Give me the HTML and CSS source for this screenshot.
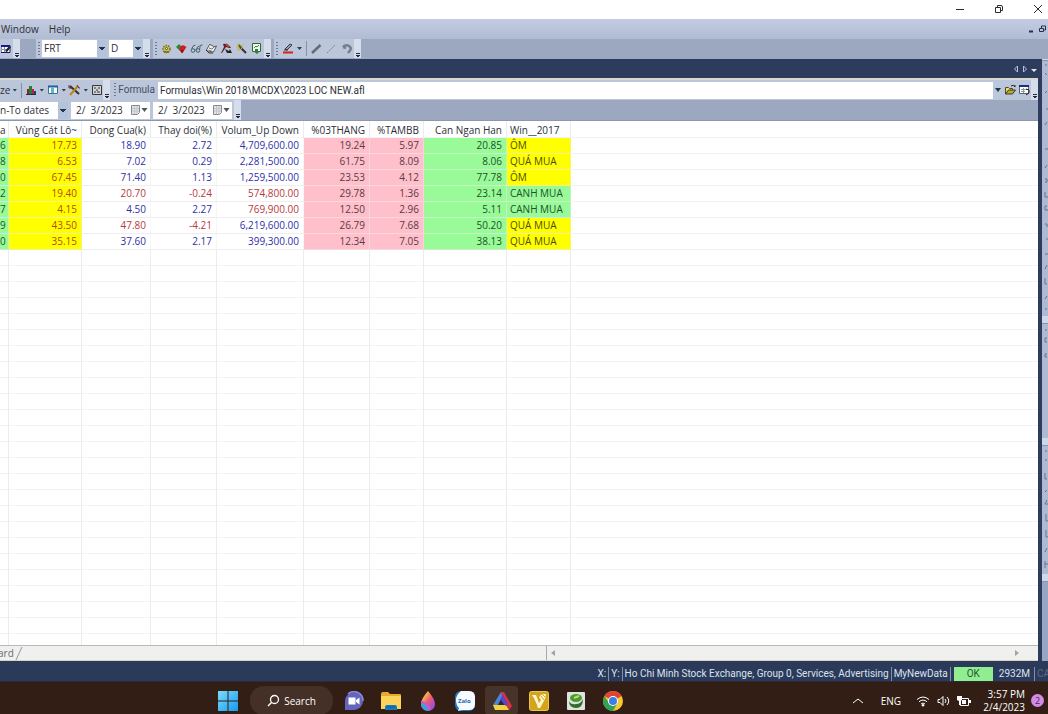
FILE: index.html
```html
<!DOCTYPE html>
<html lang="vi">
<head>
<meta charset="utf-8">
<meta name="viewport" content="width=device-width, initial-scale=1">
<title>Formula analysis</title>
<link rel="stylesheet" href="styles.css">
</head>
<body>
<div class="desktop">
  <header class="titlebar">
    <button class="win-btn" aria-label="Minimize"><svg width="12" height="12" viewBox="0 0 12 12"><path d="M2 6.500h8" class="ink"/></svg></button>
    <button class="win-btn" aria-label="Restore"><svg width="12" height="12" viewBox="0 0 12 12"><path d="M2.500 4.500h5v5h-5zM4.500 4V2.500h3.500q1.500 0 1.500 1.500v3.500h-1.500" class="ink"/></svg></button>
    <button class="win-btn" aria-label="Close"><svg width="12" height="12" viewBox="0 0 12 12"><path d="M2 2l8 8M10 2l-8 8" class="ink"/></svg></button>
  </header>
  <nav class="menubar">
    <button class="menu">Window</button>
    <button class="menu">Help</button>
    <span class="push mdi">
      <button class="icon" aria-label="Minimize document"><svg width="10" height="10" viewBox="0 0 10 10"><path d="M3 7.500h4" class="navy2"/></svg></button>
      <button class="icon" aria-label="Restore document"><svg width="10" height="10" viewBox="0 0 10 10"><path d="M2.500 4.500h4v3h-4zM4.500 4v-2h4v4h-2" class="navy1"/></svg></button>
    </span>
  </nav>
  <div class="toolbar main-tools">
    <div class="group first">
      <button class="icon" aria-label="Layout"><svg width="12" height="12" viewBox="0 0 12 12"><path d="M0 2.500h9v7H0z" fill="#fff" stroke="#171a69"/><path d="M0 3h8" stroke="#171a90" stroke-width="2"/><path d="M0 6.500h8M3.500 4v5" stroke="#8a8cb0"/><path d="M4 8l4-5 2 1-4 5z" fill="#222"/></svg></button>
      <span class="more"></span>
    </div>
    <div class="group">
      <span class="grip"></span>
      <select class="combo symbol" aria-label="Symbol"><option>FRT</option></select>
      <select class="combo period" aria-label="Interval"><option>D</option></select>
      <span class="more"></span>
    </div>
    <div class="group">
      <span class="grip"></span>
      <button class="icon" aria-label="Settings"><svg width="13" height="13" viewBox="0 0 13 13"><circle cx="6.500" cy="7" r="3.500" fill="#c8c348" stroke="#77712b" stroke-width="1.500" stroke-dasharray="1.500 1"/><circle cx="6.500" cy="6.500" r="1" fill="#fff" stroke="#55501f"/><path d="M4 9h5v2H4z" fill="#7d7926"/></svg></button>
      <button class="icon" aria-label="Favourite"><svg width="13" height="13" viewBox="0 0 13 13"><path d="M1 5l3-3 3 3-3 3z" fill="#298b32"/><path d="M5 5q2-2.500 4-1.500l2.500 1.500-4 6L4 8z" fill="#cf1c26"/><path d="M5 8l4 0-2 3.500z" fill="#8a1018"/></svg></button>
      <button class="icon" aria-label="Find"><svg width="13" height="13" viewBox="0 0 13 13" fill="none" stroke="#46636c"><circle cx="3" cy="8.500" r="1.800"/><circle cx="8" cy="8.500" r="1.800"/><path d="M1.500 7.500q1-4.500 4-4.500M9.500 8q.500-5 1.500-5h1.500M4.500 8h2M6.500 7q1-3 3-3"/></svg></button>
      <button class="icon" aria-label="Notes"><svg width="13" height="13" viewBox="0 0 13 13"><path d="M1.500 8l3-5.500 3 1 1 1.500 3-1-3 6-6-1z" fill="#eceded" stroke="#555b63"/><path d="M4 6l3 1 2-2M3.500 8l3 1" stroke="#777d85" fill="none"/><path d="M1 8l3 3h4" stroke="#333" fill="none"/></svg></button>
      <button class="icon" aria-label="Build"><svg width="13" height="13" viewBox="0 0 13 13"><path d="M3 2q5-1 8 4l-2 0-3-1-4 6H1l3-6z" fill="#5d2427"/><path d="M5 7l4 2 1-2 2 4H7z" fill="#292225"/><path d="M6 2l3 3" stroke="#bd4347" stroke-width="2"/></svg></button>
      <button class="icon" aria-label="Wizard"><svg width="13" height="13" viewBox="0 0 13 13"><path d="M5 5l6 6" stroke="#34332c" stroke-width="2"/><path d="M4 1v8M1 5h7M2 2l5 5M9 2L2 8" stroke="#beb63f"/><path d="M4 3l2 3" stroke="#575121" stroke-width="2"/></svg></button>
      <button class="icon" aria-label="Chart"><svg width="13" height="13" viewBox="0 0 13 13"><path d="M2.500 1.500h8v8h-8z" fill="#eef3ed" stroke="#35633b"/><path d="M4 6l2-2 1 1 2-2" stroke="#3d9147" fill="none"/><path d="M5 7h3v2h2l-3 3-4-3h2z" fill="#29843b"/></svg></button>
      <span class="more"></span>
    </div>
    <div class="group">
      <span class="grip"></span>
      <button class="icon" aria-label="Line colour"><svg width="14" height="13" viewBox="0 0 14 13"><path d="M4 7l5-5 2 1-5 5z" fill="#9b9faa" stroke="#36394b"/><path d="M3 8h4" stroke="#333"/><path d="M2 10.500h10" stroke="#d92024" stroke-width="2"/></svg></button>
      <span class="caret"></span>
      <span class="rule"></span>
      <button class="icon" aria-label="Line"><svg width="13" height="13" viewBox="0 0 13 13"><path d="M2 11l8.500-8" stroke="#666c76" stroke-width="2.500"/></svg></button>
      <button class="icon" aria-label="Dashed line"><svg width="13" height="13" viewBox="0 0 13 13"><path d="M2 11l8-8" stroke="#7b8290" stroke-dasharray="2 1"/></svg></button>
      <button class="icon" aria-label="Magnet"><svg width="13" height="13" viewBox="0 0 13 13"><path d="M3 5q3-3 6-1t1 4.500L8 11M3 5l3 1" fill="none" stroke="#777e8d" stroke-width="2.500"/></svg></button>
      <span class="more"></span>
    </div>
  </div>
  <div class="workspace">
    <main class="document">
      <div class="tabstrip">
        <button class="icon nav" aria-label="Previous tab"><svg width="8" height="8" viewBox="0 0 8 8"><path d="M5.500 1v6l-3-3z" fill="none" stroke="#b9c3d5"/></svg></button>
        <button class="icon nav" aria-label="Next tab"><svg width="8" height="8" viewBox="0 0 8 8"><path d="M2.500 1v6l3-3z" fill="none" stroke="#b9c3d5"/></svg></button>
        <button class="icon nav" aria-label="Tab list"><svg width="8" height="8" viewBox="0 0 8 8"><path d="M1 4h6L4 7z" fill="#e2e7f0"/></svg></button>
      </div>
      <div class="toolbar formula-tools">
        <div class="group">
          <button class="text-btn">ze</button>
          <span class="caret"></span>
          <span class="rule"></span>
          <button class="icon" aria-label="Report"><svg width="12" height="12" viewBox="0 0 12 12"><path d="M2 5h2v6H2z" fill="#8c2328"/><path d="M4 2h3v9H4z" fill="#267d38"/><path d="M7 5h2v6H7z" fill="#bd2430"/><path d="M9 7h2v4H9z" fill="#253b9b"/><path d="M1 10.500h10" stroke="#252d45"/></svg></button>
          <span class="caret"></span>
          <button class="icon" aria-label="Columns"><svg width="12" height="12" viewBox="0 0 12 12"><path d="M1.500 2.500h9v7h-9z" fill="#fff" stroke="#3e7096"/><path d="M1 2.500h10" stroke="#215da0" stroke-width="2"/><path d="M4 4h3v5H4z" fill="#54bdd1"/></svg></button>
          <span class="caret"></span>
          <button class="icon" aria-label="Tools"><svg width="13" height="12" viewBox="0 0 13 12"><path d="M2 2l9 8" stroke="#302f34" stroke-width="2"/><path d="M2 11l8-9" stroke="#c4821c" stroke-width="2"/><path d="M9 1l2 3h1M1 1v3h3" stroke="#4b3b21" fill="none"/></svg></button>
          <span class="caret"></span>
          <button class="icon" aria-label="Options"><svg width="12" height="12" viewBox="0 0 12 12"><path d="M1.500 1.500h9v9h-9z" fill="#d1d2d3" stroke="#34373e"/><path d="M3 4h2M7 4h2M5 6h2M3 8h2M6 8h3" stroke="#333"/></svg></button>
          <span class="more"></span>
        </div>
        <div class="group grow">
          <span class="grip"></span>
          <label for="formula">Formula</label>
          <input class="formula" id="formula" type="text" value="Formulas\Win 2018\MCDX\2023 LOC NEW.afl">
          <button class="drop" aria-label="Recent formulas"></button>
          <button class="icon open" aria-label="Open"><svg width="13" height="12" viewBox="0 0 13 12"><path d="M1.500 10V3.500h3l1 1h3V6" fill="#e9dc72" stroke="#4d4b22"/><path d="M1.500 10l3-4h7l-3 4z" fill="#b5a739" stroke="#3e3c18"/><path d="M7 2q3-2 4 1V1" fill="none" stroke="#222"/></svg></button>
          <button class="icon" aria-label="Edit formula"><svg width="13" height="12" viewBox="0 0 13 12"><path d="M1.500 1.500h9v8h-9z" fill="#fff" stroke="#58616f"/><path d="M1 2h10" stroke="#202b87" stroke-width="2"/><path d="M3 5.500h6M3 7.500h4M5.500 4v5" stroke="#889999"/><path d="M8 5l3 1v3l-3 2" fill="none" stroke="#222"/></svg></button>
          <span class="more"></span>
        </div>
      </div>
      <div class="toolbar date-tools">
        <div class="group">
          <select class="combo range" aria-label="Range"><option>n-To dates</option></select>
          <span class="date"><input type="text" aria-label="From date" value="2/  3/2023"><button class="cal" aria-label="Pick from date"><svg width="18" height="12" viewBox="0 0 18 12"><path d="M1.500 1.500h8v7l-2 2h-6z" fill="#e1e3e6" stroke="#858a92"/><path d="M2 4.500h7M2 7h7M4.500 2v8M7 2v8" stroke="#c2c5ca"/><path d="M11.500 4h6l-3 4z" fill="#50545d"/></svg></button></span>
          <span class="date"><input type="text" aria-label="To date" value="2/  3/2023"><button class="cal" aria-label="Pick to date"><svg width="18" height="12" viewBox="0 0 18 12"><path d="M1.500 1.500h8v7l-2 2h-6z" fill="#e1e3e6" stroke="#858a92"/><path d="M2 4.500h7M2 7h7M4.500 2v8M7 2v8" stroke="#c2c5ca"/><path d="M11.500 4h6l-3 4z" fill="#50545d"/></svg></button></span>
          <span class="more"></span>
        </div>
      </div>
      <div class="sheet">
        <table class="results">
          <colgroup><col class="c-cut"><col class="c-zone"><col class="c-close"><col class="c-change"><col class="c-volume"><col class="c-quarter"><col class="c-tam"><col class="c-short"><col class="c-win"></colgroup>
          <thead><tr><th>a</th><th>Vùng Cát Lô~</th><th>Dong Cua(k)</th><th>Thay doi(%)</th><th>Volum_Up Down</th><th>%03THANG</th><th>%TAMBB</th><th>Can Ngan Han</th><th>Win__2017</th></tr></thead>
          <tbody>
            <tr><td class="green">6</td><td class="yellow">17.73</td><td class="up">18.90</td><td class="up">2.72</td><td class="up">4,709,600.00</td><td class="pink">19.24</td><td class="pink">5.97</td><td class="green">20.85</td><td class="hold">ÔM</td></tr>
            <tr><td class="green">8</td><td class="yellow">6.53</td><td class="up">7.02</td><td class="up">0.29</td><td class="up">2,281,500.00</td><td class="pink">61.75</td><td class="pink">8.09</td><td class="green">8.06</td><td class="hold">QUÁ MUA</td></tr>
            <tr><td class="green">0</td><td class="yellow">67.45</td><td class="up">71.40</td><td class="up">1.13</td><td class="up">1,259,500.00</td><td class="pink">23.53</td><td class="pink">4.12</td><td class="green">77.78</td><td class="hold">ÔM</td></tr>
            <tr><td class="green">2</td><td class="yellow">19.40</td><td class="down">20.70</td><td class="down">-0.24</td><td class="down">574,800.00</td><td class="pink">29.78</td><td class="pink">1.36</td><td class="green">23.14</td><td class="green">CANH MUA</td></tr>
            <tr><td class="green">7</td><td class="yellow">4.15</td><td class="up">4.50</td><td class="up">2.27</td><td class="down">769,900.00</td><td class="pink">12.50</td><td class="pink">2.96</td><td class="green">5.11</td><td class="green">CANH MUA</td></tr>
            <tr><td class="green">9</td><td class="yellow">43.50</td><td class="down">47.80</td><td class="down">-4.21</td><td class="up">6,219,600.00</td><td class="pink">26.79</td><td class="pink">7.68</td><td class="green">50.20</td><td class="hold">QUÁ MUA</td></tr>
            <tr><td class="green">0</td><td class="yellow">35.15</td><td class="up">37.60</td><td class="up">2.17</td><td class="up">399,300.00</td><td class="pink">12.34</td><td class="pink">7.05</td><td class="green">38.13</td><td class="hold">QUÁ MUA</td></tr>
          </tbody>
          <tfoot><tr><td></td><td></td><td></td><td></td><td></td><td></td><td></td><td></td><td></td></tr></tfoot>
        </table>
      </div>
      <div class="bottom-tabs">
        <div class="tabs"><button class="tab">ard</button><svg width="8" height="15" viewBox="0 0 8 15"><path d="M1 14L7 1" stroke="#92969c" fill="none"/></svg></div>
        <div class="scroller">
          <button class="icon nav" aria-label="Scroll left"><svg width="8" height="8" viewBox="0 0 8 8"><path d="M6 1v6L2 4z" fill="#a3a3a3"/></svg></button>
          <button class="icon nav" aria-label="Scroll right"><svg width="8" height="8" viewBox="0 0 8 8"><path d="M2 1v6l4-3z" fill="#a3a3a3"/></svg></button>
        </div>
      </div>
    </main>
    <aside class="dock">
      <div class="pane tall"><svg width="6" height="250" viewBox="0 0 6 250" class="marks"><path d="M3 4h2M3 12l2 2M5 30l-2 2M4 48h2M5 61l-2 3M3 88h3M5 104l-2 3M3 118h2v3H3M3 131v5h3M5 145h-2v4h3M3 163h2v3M4 178h2M3 193h3M5 204l-2 4M3 217v6h2M5 235l-2 3M3 248h2"/></svg></div>
      <div class="pane mid"><svg width="6" height="50" viewBox="0 0 6 50" class="marks"><path d="M3 6h2M5 14H3v4h2M5 30H3v3h2"/></svg></div>
      <div class="pane low"><svg width="6" height="125" viewBox="0 0 6 125" class="marks"><path d="M3 5h2M3 14h2M3 27v6h2M5 44l-2 2M5 54l-2 4h3M4 68v7h2M4 84v7h2M5 102l-2 4M3 115v7M3 118h3"/></svg></div>
      <div class="pane rest"></div>
    </aside>
  </div>
  <footer class="status">
    <span>X:</span><span>Y:</span><span>Ho Chi Minh Stock Exchange, Group 0, Services, Advertising</span><span>MyNewData</span>
    <span class="ok-cell"><b class="ok">OK</b></span><span class="memory">2932M</span><span class="caps">CA</span>
  </footer>
  <div class="taskbar">
    <div class="apps">
      <button class="app start" aria-label="Start"><svg width="20" height="20" viewBox="0 0 20 20"><defs><linearGradient id="win" x2="1" y2="1"><stop stop-color="#7bdcfb"/><stop offset="1" stop-color="#159af2"/></linearGradient></defs><path d="M0 0h9.500v9.500H0zM10.500 0H20v9.500h-9.500zM0 10.500h9.500V20H0zM10.500 10.500H20V20h-9.500z" fill="url(#win)"/></svg></button>
      <button class="search"><svg width="13" height="13" viewBox="0 0 13 13"><circle cx="7.500" cy="5.500" r="4" fill="none" stroke="#fff" stroke-width="1.300"/><path d="M4.500 8.500L1 12" stroke="#fff" stroke-width="1.500"/></svg>Search</button>
      <button class="app" aria-label="Chat"><svg width="20" height="20" viewBox="0 0 20 20"><path d="M1 19V10a9 9 0 1 1 9 9z" fill="#6565bd"/><path d="M4 3a9 9 0 0 1 15 7" fill="none" stroke="#8c8be0" stroke-width="1.500"/><path d="M4.500 6.500h7v7h-7zM12 9l3.500-2.500v7L12 11z" fill="#fff"/></svg></button>
      <button class="app" aria-label="Files"><svg width="22" height="20" viewBox="0 0 22 20"><path d="M1 3q0-2 2-2h5l2 2h10q1 0 1 1v14H1z" fill="#e9a92d"/><path d="M1 5h20v13H1z" fill="#fbd25a"/><path d="M5 19v-3q0-2 2-2h8q2 0 2 2v3z" fill="#1679ba"/><path d="M7 16h8" stroke="#0c5b98"/></svg></button>
      <button class="app" aria-label="Paint"><svg width="18" height="22" viewBox="0 0 18 22"><defs><linearGradient id="drop" x2="1" y2="1"><stop offset=".2" stop-color="#f7c54c"/><stop offset=".5" stop-color="#ed5c6d"/><stop offset=".8" stop-color="#a64ed3"/></linearGradient></defs><path d="M9 1q7 8 7 13a7 7 0 0 1-14 0Q2 9 9 1z" fill="url(#drop)"/><path d="M2 12q6 1 8 9Q3 21 2 14z" fill="#27a9e7"/><path d="M2 11q6 0 10 7l-2 3Q7 14 2 13z" fill="#c85ac8"/></svg></button>
      <button class="app" aria-label="Zalo"><svg width="20" height="20" viewBox="0 0 20 20"><rect width="20" height="20" rx="6" fill="#1b79d1"/><path d="M6 0h8q6 0 6 6v7q0 6-6 6H7l-4 1 1-3Q1 14 1 9t5-9z" fill="#f7fbff"/><text x="3" y="12" class="zalo">Zalo</text></svg></button>
      <button class="app active" aria-label="AmiBroker"><svg width="20" height="20" viewBox="0 0 20 20"><path d="M9 1h3L6 14H1z" fill="#4687dc"/><path d="M9 1h3l8 14-3 4-6-11z" fill="#d92f42"/><path d="M1 14h13l3 5H3z" fill="#f4d43b"/><path d="M8 9l3-5 5 9-2 2z" fill="#5b45c5"/><path d="M6 14l3-5 3 5z" fill="#2f2249"/></svg></button>
      <button class="app" aria-label="Trading"><svg width="20" height="20" viewBox="0 0 20 20"><rect x=".5" y=".5" width="19" height="19" rx="2" fill="#d4a51b" stroke="#edc749"/><path d="M3 4h4l3 8 2-3-2-3 3-3h4l-1 5-5 9H9z" fill="#fff5ce"/><path d="M12 5l3 4M13 3l3 3M4 6l4 9" stroke="#d0a42b"/></svg></button>
      <button class="app" aria-label="Green app"><svg width="18" height="18" viewBox="0 0 18 18"><rect width="18" height="18" rx="1" fill="#e0e4de"/><ellipse cx="9" cy="6" rx="6" ry="4" fill="#4a9a31"/><path d="M2 9q2 4 7 3 5 0 7-5 0 9-7 9T2 9z" fill="#356b2d"/><path d="M7 6l5-2" stroke="#b5db71" stroke-width="2"/></svg></button>
      <button class="app" aria-label="Chrome"><svg width="20" height="20" viewBox="0 0 20 20"><circle cx="10" cy="10" r="10" fill="#f9c832"/><path d="M10 10L1.340 5A10 10 0 0 1 18.660 5z" fill="#df4535"/><path d="M1.340 5A10 10 0 0 0 10 20l4.500-8L10 10 6 12z" fill="#32a355"/><circle cx="10" cy="10" r="5" fill="#fff"/><circle cx="10" cy="10" r="4" fill="#3b7ee5"/></svg></button>
    </div>
    <div class="tray">
      <button class="icon" aria-label="Hidden icons"><svg width="12" height="12" viewBox="0 0 12 12"><path d="M1 8l5-4 5 4" class="white"/></svg></button>
      <button class="lang">ENG</button>
      <button class="icon" aria-label="Wi-Fi"><svg width="14" height="12" viewBox="0 0 14 12"><path d="M1 4.500q6-5 12 0M3 6.800q4-3.500 8 0M5 9q2-2 4 0" class="white"/><circle cx="7" cy="10.300" r="1.200" fill="#fff"/></svg></button>
      <button class="icon" aria-label="Volume"><svg width="13" height="12" viewBox="0 0 13 12"><path d="M1 4.500h2l3-3v9l-3-3H1zM8 4q2 2 0 4M10 2q3.500 4 0 8" class="white"/></svg></button>
      <button class="icon" aria-label="Battery"><svg width="15" height="12" viewBox="0 0 15 12"><path d="M4.500 3.500h8v7h-8z" class="white"/><path d="M6 5h4v4H6zM13 5h2v3h-2zM1 1h5v4L4 6v4H3V6L1 5z" fill="#fff"/></svg></button>
      <time class="clock" datetime="2023-02-04T15:57">3:57 PM<br>2/4/2023</time>
      <span class="badge">2</span>
    </div>
  </div>
</div>
</body>
</html>
```
FILE: styles.css
```css
* { box-sizing: border-box; }
body {
  margin: 0;
  font: 10px/16px "Open Sans", "Noto Sans", sans-serif;
  color: #2d3038;
}
button, input, select { font: inherit; color: inherit; margin: 0; padding: 0; border: 0; background: none; border-radius: 0; }
button { display: flex; align-items: center; justify-content: center; flex: none; white-space: nowrap; }
svg { display: block; flex: none; }
.desktop { display: flex; flex-direction: column; height: 100vh; overflow: hidden; background: #2c3c5d; }
.ink { fill: none; stroke: #2b2b2b; }
.navy1 { fill: none; stroke: #26304c; }
.navy2 { fill: none; stroke: #26304c; stroke-width: 2; }
.white { fill: none; stroke: #fff; }
.push { margin-left: auto; }

.titlebar { display: flex; justify-content: flex-end; gap: 27px; flex: none; height: 19px; padding-right: 4px; background: #fff; }
.win-btn { width: 12px; height: 17px; }
.menubar { display: flex; align-items: center; gap: 10px; flex: none; height: 20px; padding: 0 1px 0 1px; background: linear-gradient(#c4cce0, #b0bcd4); }
.mdi { display: flex; }
.mdi .icon { width: 11px; }

.toolbar { display: flex; flex: none; background: #9ba8c0; }
.group { display: flex; align-items: center; background: #bbc6da; }
.grow { flex: 1; min-width: 0; }
.icon { width: 15px; height: 16px; }
.nav { width: 8px; }
.grip { flex: none; width: 2px; height: 14px; margin: 0 2px; background: repeating-linear-gradient(#6c7892 0 1px, transparent 1px 3px); }
.rule { flex: none; width: 1px; height: 15px; margin: 0 2px; background: #8290aa; }
.caret { flex: none; width: 5px; height: 3px; margin: 0 2px; background: #333c50; clip-path: polygon(0 0, 100% 0, 50% 100%); }
.more { flex: none; align-self: stretch; width: 7px; background: linear-gradient(#252b3a, #252b3a) 50% 14px / 4px 1px no-repeat, linear-gradient(#252b3a, #252b3a) 50% 16px / 4px 1px no-repeat, linear-gradient(#252b3a, #252b3a) 50% 17px / 2px 1px no-repeat, #d5ddeb; }
.combo { appearance: none; height: 17px; padding: 0 4px 0 2px; line-height: 17px; background: linear-gradient(#273044, #273044) right 2px top 7px / 6px 1px no-repeat, linear-gradient(#273044, #273044) right 3px top 8px / 4px 1px no-repeat, linear-gradient(#273044, #273044) right 4px top 9px / 2px 1px no-repeat, linear-gradient(90deg, transparent calc(100% - 10px), #b3c3dc 0), #fff; }
.symbol { width: 65px; }
.period { width: 34px; margin-left: 2px; }

.main-tools { height: 20px; padding-bottom: 1px; gap: 3px; }
.first { margin-right: 13px; }
.first .icon { width: 13px; }

.workspace { display: flex; flex: 1; min-height: 0; }
.document { display: flex; flex: 1; flex-direction: column; min-width: 0; }
.tabstrip { display: flex; align-items: center; justify-content: flex-end; gap: 1px; flex: none; height: 19px; background: #2d3c5d; }
.formula-tools { height: 22px; border-top: 2px solid #d9d8d0; }
.formula-tools .icon { width: 13px; }
.formula-tools .open { width: 15px; }
.formula-tools .grip { margin: 0 2px 0 4px; }
label { color: #45506a; font-family: Roboto, sans-serif; }
.formula { flex: 1; min-width: 0; height: 17px; margin-left: 3px; padding: 0 2px; background: #fff; font-family: Roboto, sans-serif; }
.drop { width: 10px; height: 16px; background: #bac8de; }
.drop::after { content: ""; width: 6px; height: 4px; background: #273044; clip-path: polygon(0 0, 100% 0, 50% 100%); }
.date-tools { height: 21px; border-bottom: 1px solid #8f98a8; }
.range { width: 68px; padding-left: 0; }
.date { display: flex; align-items: center; width: 79px; height: 17px; margin-left: 3px; background: #fff; }
.date input { flex: 1; min-width: 0; padding-left: 5px; }
.cal { width: 22px; height: 16px; }
.date-tools .more { margin-left: 2px; }

.sheet { flex: 1; min-height: 0; overflow: hidden; background: repeating-linear-gradient(#fff 0 15px, #f3f3f3 15px 16px) 0 1px #fff; }
.results { width: 571px; table-layout: fixed; border-collapse: separate; border-spacing: 0; }
.results th, .results td { height: 16px; padding: 0 4px 0 0; line-height: 15px; text-align: right; font-weight: 400; white-space: nowrap; overflow: hidden; border-right: 1px solid #ececec; }
.results th { height: 17px; padding-top: 1px; }
.results tbody td { border-bottom: 1px solid rgba(236, 236, 236, .6); border-right-color: rgba(236, 236, 236, .5); }
.results th:last-child, .results td:last-child { padding-left: 3px; text-align: left; }
.results tfoot td { height: 100vh; }
.results tbody .yellow { background: #ff0; color: #b5491b; }
.hold { background: #ff0; color: #4c4c10; }
.green { background: #98fb98; color: #24502d; }
.pink { background: #ffc0cb; color: #593a48; }
.up { color: #2f2fa9; }
.down { color: #b9383e; }
.c-cut { width: 9px; }
.c-zone { width: 73px; }
.c-close { width: 69px; }
.c-change { width: 66px; }
.c-volume { width: 87px; }
.c-quarter { width: 66px; }
.c-tam { width: 54px; }
.c-short { width: 83px; }
.c-win { width: 64px; }

.bottom-tabs { display: flex; flex: none; height: 16px; background: #f0f0ee; border-top: 1px solid #b7b9bb; border-bottom: 1px solid #d9d4bb; }
.tabs { display: flex; flex: none; width: 52.7%; border-right: 1px solid #aaa; }
.tab { color: #686b70; padding-right: 1px; height: 14px; margin-left: -2px; }
.scroller { display: flex; align-items: center; justify-content: space-between; flex: 1; padding: 0 17px 0 2px; }
.dock { display: flex; flex: none; flex-direction: column; width: 10px; padding: 1px 0 0; border-left: 4px solid #2d3c5d; background: #ced8e9; margin-bottom: -4px; }
.pane { overflow: hidden; background: #adbad2; min-height: 0; margin-bottom: 7px; border-top: 1px solid #8795b1; }
.tall { flex: 257; }
.mid { flex: 115; }
.low { flex: 128; }
.rest { flex: 84; margin: 0; background: #97a6c2; }
.marks path { fill: none; stroke: #68758e; }

.status { display: flex; align-items: center; justify-content: flex-end; flex: none; height: 20px; padding-top: 5px; color: #dce2ed; background: #2b3a5a; white-space: nowrap; font-family: Roboto, sans-serif; }
.status span { height: 14px; line-height: 14px; padding: 0 2px; border-right: 1px solid #8290ac; }
.status .ok-cell { padding: 0 3px; border: 0; }
.ok { display: block; width: 39px; text-align: center; font-weight: 400; color: #2b5634; background: #90ee90; }
.status .memory { padding: 0 4px 0 3px; }
.status .caps { width: 13px; overflow: hidden; border: 0; padding-right: 0; color: #5c6b87; }

.taskbar { display: flex; justify-content: space-between; flex: none; height: 33px; padding: 2px 4px 0 218px; color: #fff; background: #321e14; border-top: 1px solid #292b3b; }
.apps { display: flex; align-items: center; gap: 4px; height: 33px; }
.app { width: 33px; height: 29px; border-radius: 4px; }
.start { width: 20px; }
.search { gap: 4px; width: 83px; height: 29px; margin: 0 0 0 8px; border-radius: 14px; background: #443027; }
.active { background: #46342b; }
.zalo { font: 700 6px "Open Sans", sans-serif; fill: #1967b0; }
.tray { display: flex; align-items: center; height: 33px; }
.lang { margin: 0 12px 0 13px; }
.tray .icon { width: 20px; }
.clock { margin-left: 8px; width: 44px; text-align: right; line-height: 13px; white-space: nowrap; }
.badge { width: 13px; height: 13px; margin-left: 6px; border-radius: 50%; text-align: center; line-height: 13px; font-size: 9px; color: #442855; background: #d58be6; }
```
